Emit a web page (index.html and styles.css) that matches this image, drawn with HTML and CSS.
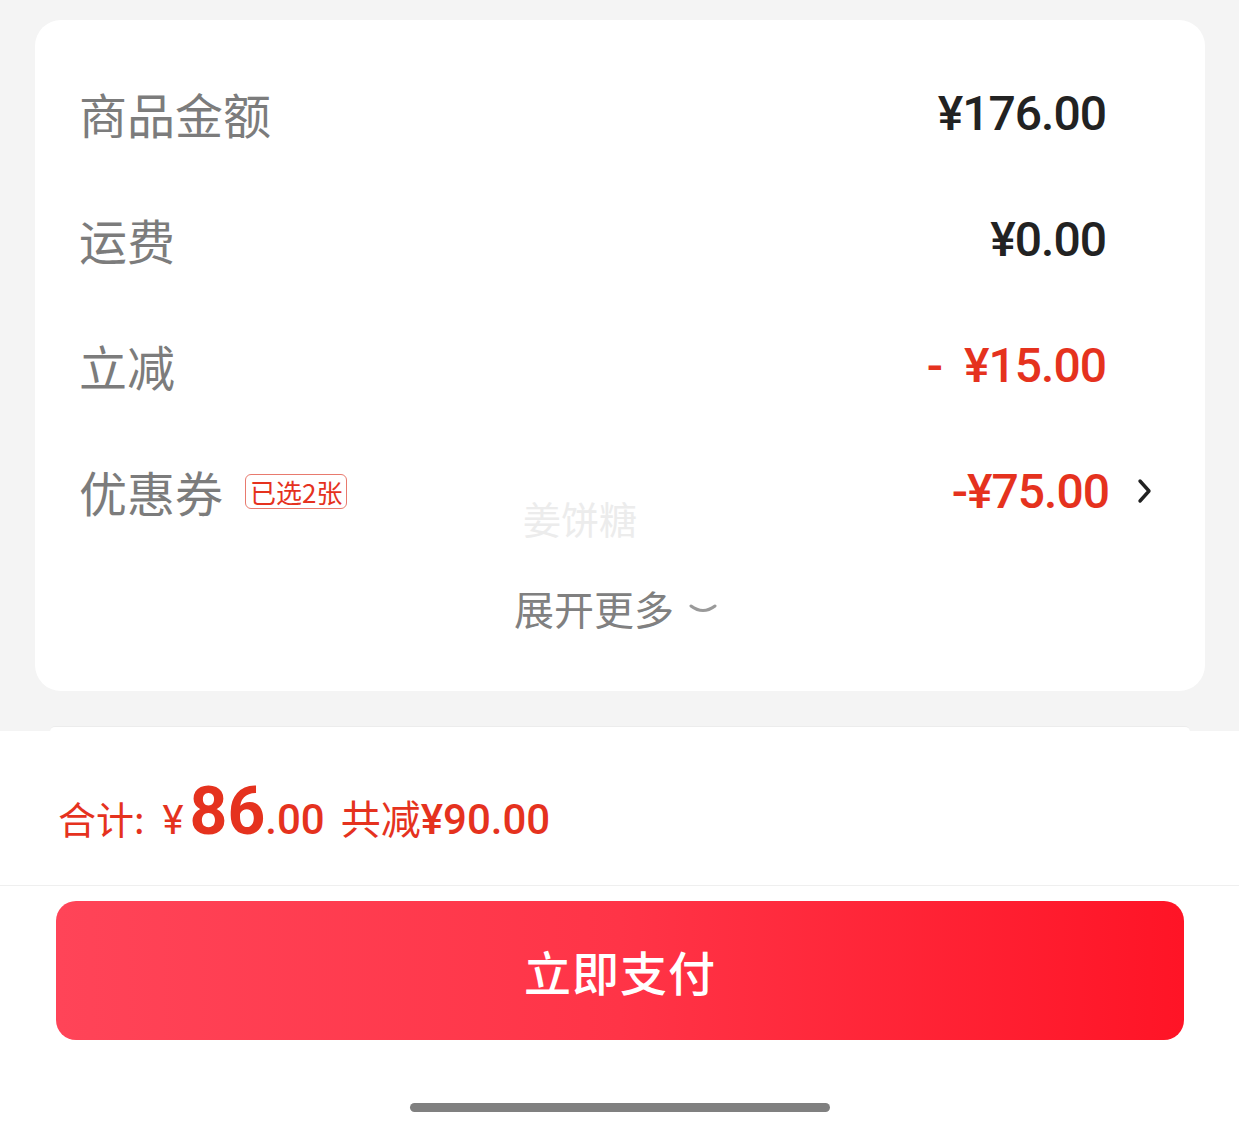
FILE: index.html
```html
<!DOCTYPE html>
<html lang="zh-CN">
<head>
    <meta charset="UTF-8">
    <meta name="viewport" content="width=device-width, initial-scale=1.0">
    <title>确认订单</title>
    <link rel="stylesheet" href="styles.css">
</head>
<body>
    <div class="page">
        <div class="card">
            <div class="row">
                <span class="label">商品金额</span>
                <span class="value">¥176.00</span>
            </div>
            <div class="row">
                <span class="label">运费</span>
                <span class="value">¥0.00</span>
            </div>
            <div class="row">
                <span class="label">立减</span>
                <span class="value red">-&nbsp;&nbsp;¥15.00</span>
            </div>
            <div class="row coupon">
                <span class="label">优惠券 <span class="tag">已选2张</span></span>
                <span class="value red">-¥75.00</span>
                <svg class="arrow" width="16" height="28" viewBox="0 0 16 28">
                    <path d="M3 4 L12 14 L3 24" fill="none" stroke="#222" stroke-width="3.4" stroke-linecap="round" stroke-linejoin="round"/>
                </svg>
            </div>
            <div class="more">
                展开更多
                <svg width="30" height="14" viewBox="0 0 30 14">
                    <path d="M3 4 Q15 13 27 4" fill="none" stroke="#9a9a9a" stroke-width="3" stroke-linecap="round"/>
                </svg>
            </div>
            <div class="watermark">姜饼糖</div>
        </div>

        <div class="peek"></div>

        <div class="footer">
            <div class="total">
                合计: <span class="yen">¥</span><span class="big">86</span><span class="small">.00</span>
                <span class="saved">共减<span class="num">¥90.00</span></span>
            </div>
            <div class="pay-wrap">
                <button class="pay-btn">立即支付</button>
            </div>
            <div class="home-bar"></div>
        </div>
    </div>
</body>
</html>
```

FILE: styles.css
```css
body {
    margin: 0;
    padding: 0;
    background-color: #f4f4f4;
    font-family: "Noto Sans CJK SC", "Noto Sans", sans-serif;
}

.page {
    width: 1239px;
    height: 1138px;
    overflow: hidden;
    display: flex;
    flex-direction: column;
}

.card {
    position: relative;
    margin: 20px 34px 0 35px;
    padding: 30px 52px 49px 44px;
    background-color: #fff;
    border-radius: 26px;
}

.row {
    display: flex;
    align-items: center;
    height: 126px;
}

.label {
    flex: 1;
    display: flex;
    align-items: center;
    font-size: 48px;
    color: #7c7c7c;
}

.value {
    margin-right: 47px;
    font-family: Roboto, "Noto Sans", sans-serif;
    font-weight: 500;
    font-size: 48px;
    letter-spacing: -1px;
    color: #222;
}

.value.red {
    color: #e5321e;
}

.coupon .value {
    margin-right: 28px;
}

.tag {
    margin-left: 22px;
    padding: 0 4px;
    height: 35px;
    line-height: 33px;
    border: 1px solid #e87a6e;
    border-radius: 6px;
    font-size: 26px;
    color: #e5321e;
    box-sizing: border-box;
}

.more {
    margin-top: 20px;
    height: 68px;
    display: flex;
    align-items: center;
    justify-content: center;
    gap: 14px;
    font-size: 40px;
    color: #808080;
}

.more svg {
    margin-top: 2px;
}

.watermark {
    position: absolute;
    left: 488px;
    top: 470px;
    font-size: 38px;
    color: #ececec;
}

.peek {
    margin: 35px 49px 0 50px;
    height: 4px;
    background-color: #fff;
    border-radius: 12px 12px 0 0;
    border-top: 1px solid #ececec;
}

.footer {
    flex: 1;
    background-color: #fff;
    display: flex;
    flex-direction: column;
}

.total {
    height: 155px;
    display: flex;
    align-items: baseline;
    padding: 0 58px;
    box-sizing: border-box;
    padding-top: 42px;
    border-bottom: 1px solid #efefef;
    font-size: 38px;
    color: #e5321e;
}

.total .yen {
    margin-left: 18px;
    font-family: Roboto, sans-serif;
    font-size: 40px;
}

.total .big {
    margin-left: 6px;
    font-family: Roboto, sans-serif;
    font-weight: 700;
    font-size: 66px;
}

.total .small {
    font-family: Roboto, sans-serif;
    font-weight: 500;
    font-size: 42px;
}

.total .saved {
    margin-left: 16px;
    font-size: 40px;
}

.total .num {
    font-family: Roboto, sans-serif;
    font-weight: 500;
    font-size: 42px;
}

.pay-wrap {
    padding: 15px 55px 0 56px;
}

.pay-btn {
    width: 100%;
    height: 139px;
    border: none;
    border-radius: 20px;
    background: linear-gradient(90deg, #ff4458 0%, #ff3447 50%, #ff1426 100%);
    color: #fff;
    font-family: "Noto Sans CJK SC", sans-serif;
    font-weight: 500;
    font-size: 47px;
    letter-spacing: 1px;
}

.home-bar {
    width: 420px;
    height: 9px;
    margin: 63px auto 0;
    border-radius: 5px;
    background-color: #808080;
}
```
